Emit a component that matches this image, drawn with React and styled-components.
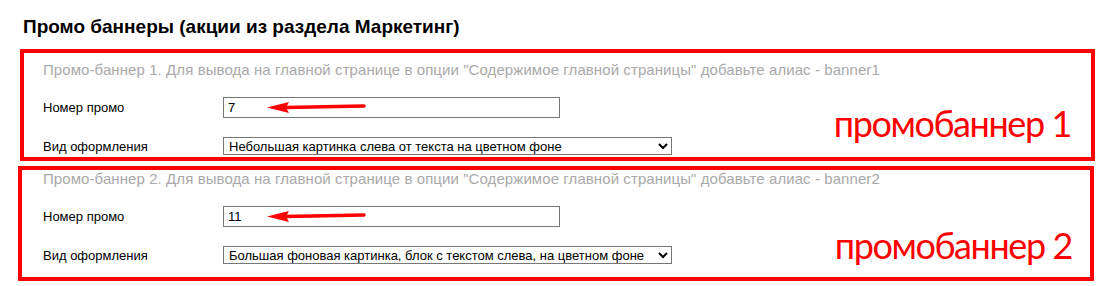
import React from "react";
import styled, { createGlobalStyle } from "styled-components";

const Global = createGlobalStyle`
  html, body { margin: 0; padding: 0; background: #fff; }
  body { font-family: "Liberation Sans", Arial, sans-serif; color: #000; }
`;

const Page = styled.div`
  width: 1108px;
  height: 286px;
  box-sizing: border-box;
  padding: 16px 0 0 20px;
  overflow: hidden;
`;

const Title = styled.h2`
  margin: 0 0 11px 3px;
  font-size: 19px;
  line-height: 22px;
  font-weight: bold;
  color: #000;
`;

const Box = styled.section`
  display: flex;
  flex-direction: column;
  box-sizing: border-box;
  width: ${(p) => p.$w}px;
  margin-left: ${(p) => p.$ml}px;
  margin-bottom: 5px;
  border: 4px solid #ff0000;
  padding: ${(p) => p.$pt}px 0 ${(p) => p.$pb}px ${(p) => 43 - 4 - 20 - p.$ml}px;
`;

const Hint = styled.div`
  font-size: 15px;
  line-height: 17px;
  letter-spacing: 0.08px;
  color: #a9a9a9;
  margin-bottom: 19px;
  white-space: nowrap;
`;

const Body = styled.div`
  display: flex;
  align-items: flex-end;
  justify-content: space-between;
`;

const Rows = styled.div`
  display: flex;
  flex-direction: column;
  gap: 19px;
`;

const Row = styled.div`
  display: grid;
  grid-template-columns: 180px auto;
  align-items: center;
  justify-content: start;
`;

const Label = styled.label`
  font-size: 13px;
  line-height: 15px;
  color: #000;
`;

const Field = styled.div`
  position: relative;
  width: ${(p) => p.$w}px;
`;

const TextInput = styled.input`
  box-sizing: border-box;
  display: block;
  width: 100%;
  height: 21px;
  margin: 0;
  padding: 0 4px;
  border: 1px solid #767676;
  border-radius: 0;
  font-family: "Liberation Sans", Arial, sans-serif;
  font-size: 13px;
  color: #000;
  background: #fff;
  outline: none;
`;

const Select = styled.select`
  box-sizing: border-box;
  display: block;
  width: 100%;
  height: 18px;
  margin: 0;
  padding: 0 0 0 1px;
  border: 1px solid #767676;
  border-radius: 0;
  font-family: "Liberation Sans", Arial, sans-serif;
  font-size: 13px;
  color: #000;
  background: #fff;
  outline: none;
`;

const Arrow = styled.svg`
  position: absolute;
  left: 44px;
  top: 4px;
  width: 100px;
  height: 12px;
  pointer-events: none;
`;

const Note = styled.div`
  flex-shrink: 0;
  margin: 0 ${(p) => p.$mr}px ${(p) => p.$mb}px 0;
  font-family: "Lato", "Open Sans", sans-serif;
  font-size: 36px;
  letter-spacing: -1.4px;
  line-height: 1;
  color: #ff0000;
  white-space: nowrap;
`;

const RedArrow = () => (
  <Arrow viewBox="0 0 100 12">
    <path d="M0 6.5 L22 1 L19 6.5 L22 12 Z" fill="#ff0000" />
    <path d="M18 6.5 L97 5" stroke="#ff0000" strokeWidth="3.4" strokeLinecap="round" fill="none" />
  </Arrow>
);

const banners = [
  {
    n: 1,
    promo: "7",
    view: "Небольшая картинка слева от текста на цветном фоне",
    box: { w: 1075, ml: 0, pt: 8, pb: 2 },
    note: { mr: 20, mb: 14 },
  },
  {
    n: 2,
    promo: "11",
    view: "Большая фоновая картинка, блок с текстом слева, на цветном фоне",
    box: { w: 1076, ml: -2, pt: 0, pb: 13 },
    note: { mr: 18, mb: 1 },
  },
];

export default function App() {
  return (
    <>
      <Global />
      <Page>
        <Title>Промо баннеры (акции из раздела Маркетинг)</Title>
        {banners.map((b) => (
          <Box key={b.n} $w={b.box.w} $ml={b.box.ml} $pt={b.box.pt} $pb={b.box.pb}>
            <Hint>
              Промо-баннер {b.n}. Для вывода на главной странице в опции "Содержимое главной страницы" добавьте алиас - banner{b.n}
            </Hint>
            <Body>
              <Rows>
                <Row>
                  <Label>Номер промо</Label>
                  <Field $w={337}>
                    <TextInput defaultValue={b.promo} />
                    <RedArrow />
                  </Field>
                </Row>
                <Row>
                  <Label>Вид оформления</Label>
                  <Field $w={449}>
                    <Select defaultValue={b.view}>
                      <option>{b.view}</option>
                    </Select>
                  </Field>
                </Row>
              </Rows>
              <Note $mr={b.note.mr} $mb={b.note.mb}>промобаннер {b.n}</Note>
            </Body>
          </Box>
        ))}
      </Page>
    </>
  );
}
